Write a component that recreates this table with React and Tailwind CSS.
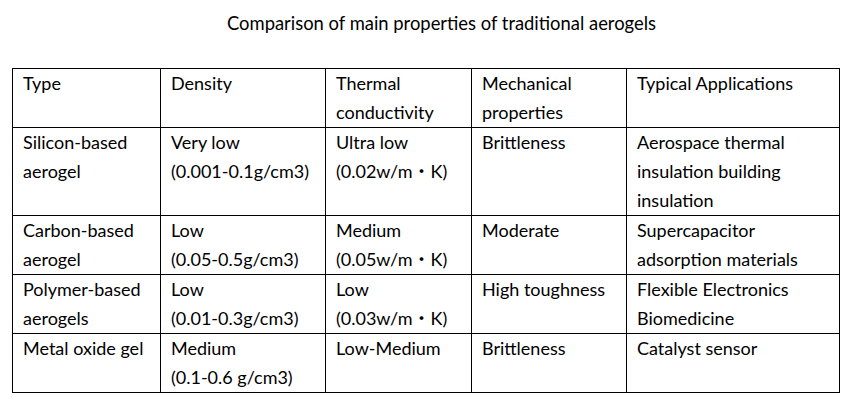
const headers = ["Type", "Density", "Thermal\nconductivity", "Mechanical\nproperties", "Typical Applications"];

const rows = [
  ["Silicon-based\naerogel", "Very low\n(0.001-0.1g/cm3)", "Ultra low\n(0.02w/m・K)", "Brittleness", "Aerospace thermal\ninsulation building\ninsulation"],
  ["Carbon-based\naerogel", "Low\n(0.05-0.5g/cm3)", "Medium\n(0.05w/m・K)", "Moderate", "Supercapacitor\nadsorption materials"],
  ["Polymer-based\naerogels", "Low\n(0.01-0.3g/cm3)", "Low\n(0.03w/m・K)", "High toughness", "Flexible Electronics\nBiomedicine"],
  ["Metal oxide gel", "Medium\n(0.1-0.6 g/cm3)", "Low-Medium", "Brittleness", "Catalyst sensor"],
];

// column widths measured from the grid lines
const widths = ["w-[148px]", "w-[165px]", "w-[146px]", "w-[155px]", "w-[213px]"];

function Cell({ text }) {
  return (
    <td className="border border-black align-top pl-[10px] pr-1 py-0 whitespace-pre leading-[29px] text-[18px]">
      {text}
    </td>
  );
}

export default function App() {
  return (
    <div className="w-[863px] h-[413px] bg-white text-black font-['Lato','Noto_Sans_CJK_JP',sans-serif] text-[18.4px]">
      <div className="pt-[9px] pl-[20px] text-center leading-[29px]">
        Comparison of main properties of traditional aerogels
      </div>
      <table className="ml-[12px] mt-[30px] w-[828px] table-fixed border-collapse">
        <colgroup>
          {widths.map((w, i) => (
            <col key={i} className={w} />
          ))}
        </colgroup>
        <tbody>
          <tr>
            {headers.map((h, i) => (
              <Cell key={i} text={h} />
            ))}
          </tr>
          {rows.map((r, i) => (
            <tr key={i}>
              {r.map((c, j) => (
                <Cell key={j} text={c} />
              ))}
            </tr>
          ))}
        </tbody>
      </table>
    </div>
  );
}
